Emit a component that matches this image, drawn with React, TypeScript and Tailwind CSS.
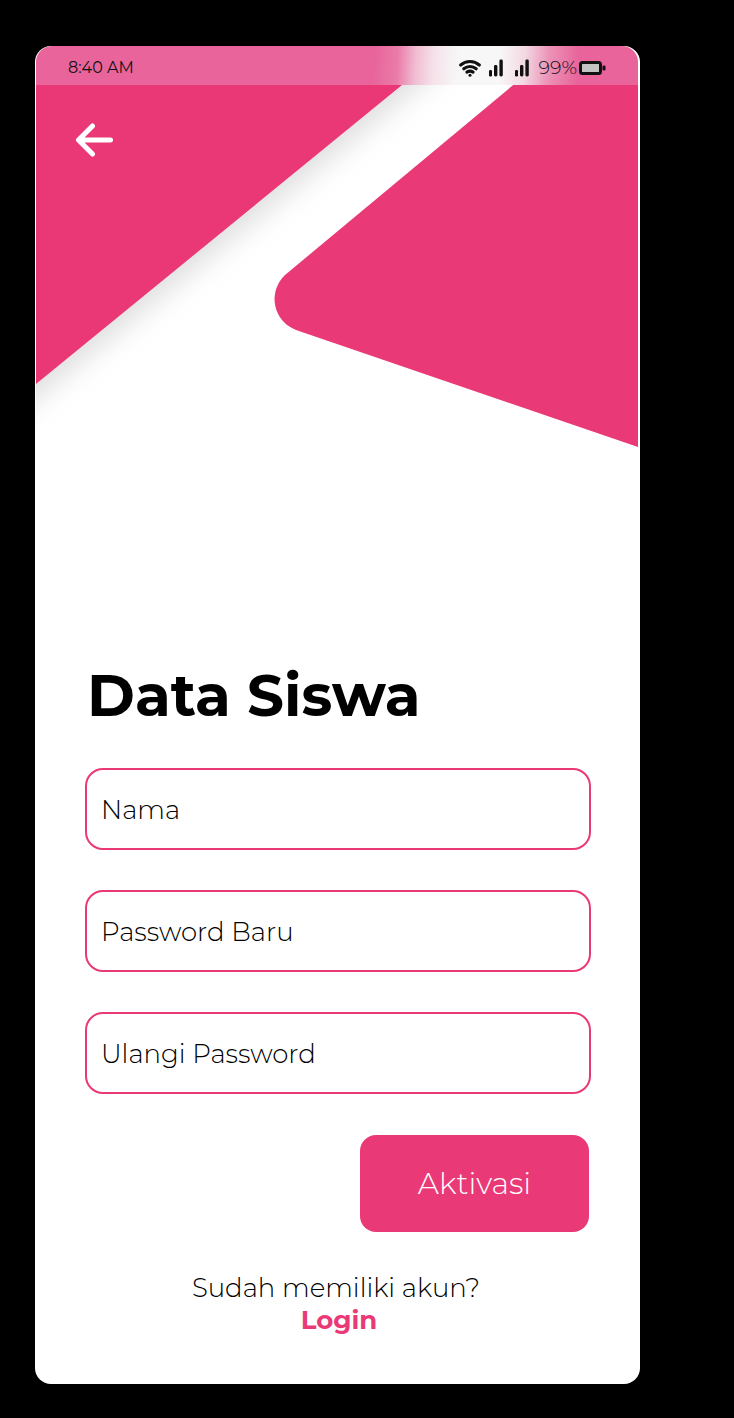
import React from "react";

function HeaderArt() {
  return (
    <svg viewBox="0 0 605 420" className="absolute inset-x-0 top-0 w-full" aria-hidden="true">
      <defs>
        <filter id="shade" x="-20%" y="-20%" width="140%" height="150%">
          <feDropShadow dx="0" dy="14" stdDeviation="14" floodColor="#000" floodOpacity="0.13" />
        </filter>
        <clipPath id="below-bar">
          <rect x="0" y="38" width="605" height="382" />
        </clipPath>
      </defs>
      <g clipPath="url(#below-bar)">
        <path d="M-80 -81 H514 L1 338 L-80 404 Z" fill="#ea3977" filter="url(#shade)" />
        <path d="M525 0 L250 229 A33 33 0 0 0 261 284 L603 401 V0 Z" fill="#ea3977" />
        <path d="M0.5 0 V420" stroke="#fff" strokeWidth="1" />
      </g>
    </svg>
  );
}

function WifiIcon() {
  return (
    <svg viewBox="0 0 22 17" className="h-[17px] w-[22px]" fill="none" stroke="#111" strokeWidth="3.1" strokeLinecap="round" aria-hidden="true">
      <path d="M1.7 5 C7 0.4 15 0.4 20.3 5" />
      <path d="M4.8 8.8 C8.3 5.8 13.7 5.8 17.2 8.8" />
      <path d="M7.9 12.1 C9.7 10.9 12.3 10.9 14.1 12.1" />
      <circle cx="11" cy="15.2" r="1.5" fill="#111" stroke="none" />
    </svg>
  );
}

function SignalIcon() {
  return (
    <svg viewBox="0 0 14 18" className="h-[18px] w-[14px]" fill="#111" aria-hidden="true">
      <rect x="0" y="11" width="3" height="6.5" rx="1.3" />
      <rect x="5" y="6" width="3.4" height="11.5" rx="1.4" />
      <rect x="10.4" y="0.5" width="3.4" height="17" rx="1.4" />
    </svg>
  );
}

function BatteryIcon() {
  return (
    <svg viewBox="0 0 27 14" className="h-[14px] w-[27px]" aria-hidden="true">
      <rect x="1.5" y="1.5" width="20" height="11" rx="2" fill="#c4c4c4" stroke="#111" strokeWidth="3" />
      <rect x="23.5" y="4.5" width="3" height="5" rx="1.2" fill="#111" />
    </svg>
  );
}

function StatusBar() {
  return (
    <div className="relative mr-[2px] ml-px flex h-[39px] items-center justify-between rounded-t-[16px] bg-[linear-gradient(93deg,#e8649b_0%,#e8649b_56%,#ea7ca9_60%,#f1bdd2_63%,#f5e2ea_66%,#f7f7f7_70%,#f7f7f7_77%,#f3d9e3_81%,#ec93b7_85%,#e8649b_90%)] pr-[32px] pl-[32px] text-[#111]">
      <span className="pt-[5px] text-[16px] leading-[20px]">8:40 AM</span>
      <div className="flex items-center gap-[2px] pt-[5px]">
        <div className="flex items-center gap-[8px]">
          <WifiIcon />
          <div className="flex gap-[12px]">
            <SignalIcon />
            <SignalIcon />
          </div>
          <span className="pl-[2px] text-[19px] leading-[20px] font-light">99%</span>
        </div>
        <BatteryIcon />
      </div>
    </div>
  );
}

function Field({ label, type }: { label: string; type: string }) {
  return (
    <input
      type={type}
      aria-label={label}
      placeholder={label}
      className="h-[82px] w-full rounded-[18px] border-2 border-[#ea3977] bg-white px-[14px] pt-[2px] text-[26px] font-light text-black outline-none placeholder:text-black placeholder:opacity-100"
    />
  );
}

export default function App() {
  return (
    <div className="min-h-screen bg-black pt-[46px] pr-[94px] pb-[34px] pl-[35px] font-['Montserrat','Inter',sans-serif]">
      <main className="relative overflow-hidden rounded-[16px] bg-white text-black">
        <HeaderArt />
        <StatusBar />
        <button type="button" aria-label="Kembali" className="relative mt-[38px] ml-[40px] block">
          <svg viewBox="0 0 38 34" className="h-[34px] w-[38px]" fill="none" stroke="#fff" strokeWidth="5" strokeLinecap="round" strokeLinejoin="round" aria-hidden="true">
            <path d="M35.5 17 H4 M17.5 3 L3.5 17 L17.5 31" />
          </svg>
        </button>
        <form className="mt-[503px] pr-[49px] pl-[50px]" onSubmit={(e) => e.preventDefault()}>
          <h1 className="pl-[2px] text-[58px] leading-[72px] font-bold">Data Siswa</h1>
          <div className="mt-[36px] flex flex-col gap-[40px]">
            <Field label="Nama" type="text" />
            <Field label="Password Baru" type="password" />
            <Field label="Ulangi Password" type="password" />
          </div>
          <div className="mt-[41px] flex justify-end pr-[2px]">
            <button type="submit" className="h-[97px] w-[229px] rounded-[16px] bg-[#ea3977] text-[30px] font-light text-white">
              Aktivasi
            </button>
          </div>
          <p className="mt-[40px] pr-[4px] pb-[48px] text-center text-[26px] leading-[32px] font-light">
            Sudah memiliki akun?
            <br />
            <a href="#login" className="pl-[6px] font-bold text-[#ea3977]">
              Login
            </a>
          </p>
        </form>
      </main>
    </div>
  );
}
